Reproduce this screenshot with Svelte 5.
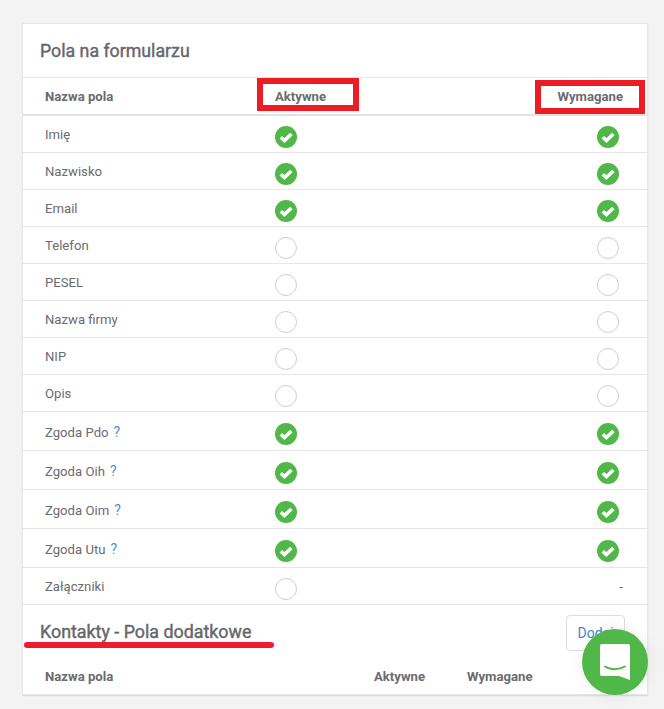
<script>
	const fields = [
		{ name: 'Imię', active: true, required: true },
		{ name: 'Nazwisko', active: true, required: true },
		{ name: 'Email', active: true, required: true },
		{ name: 'Telefon', active: false, required: false },
		{ name: 'PESEL', active: false, required: false },
		{ name: 'Nazwa firmy', active: false, required: false },
		{ name: 'NIP', active: false, required: false },
		{ name: 'Opis', active: false, required: false },
		{ name: 'Zgoda Pdo', active: true, required: true, help: true },
		{ name: 'Zgoda Oih', active: true, required: true, help: true },
		{ name: 'Zgoda Oim', active: true, required: true, help: true },
		{ name: 'Zgoda Utu', active: true, required: true, help: true },
		{ name: 'Załączniki', active: false, required: null }
	];
</script>

{#snippet mark(on)}
	{#if on}
		<svg class="mark" viewBox="0 0 22 22" aria-hidden="true">
			<circle cx="11" cy="11" r="11" fill="#50b848" />
			<path d="M5.8 11.2l3.600 3.400 7-6.600" fill="none" stroke="#fff" stroke-width="3.600" />
		</svg>
	{:else}
		<span class="mark empty"></span>
	{/if}
{/snippet}

<div class="page">
	<section class="card">
		<h2 class="title">Pola na formularzu</h2>

		<div class="row head">
			<span>Nazwa pola</span>
			<span>Aktywne</span>
			<span class="right">Wymagane</span>
		</div>

		{#each fields as f}
			<div class="row" class:help={f.help}>
				<span>{f.name}{#if f.help}<a href="#help">?</a>{/if}</span>
				<span class="cell">{@render mark(f.active)}</span>
				<span class="right cell">
					{#if f.required === null}
						<span class="dash">-</span>
					{:else}
						{@render mark(f.required)}
					{/if}
				</span>
			</div>
		{/each}

		<div class="sub">
			<h2 class="subtitle">Kontakty - Pola dodatkowe</h2>
			<button class="add">Dodaj</button>
		</div>

		<div class="foot">
			<span>Nazwa pola</span>
			<span>Aktywne</span>
			<span>Wymagane</span>
		</div>
	</section>

	<!-- annotations and chat widget sit on top of the page -->
	<span class="box box-a"></span>
	<span class="box box-b"></span>
	<span class="scribble"></span>

	<div class="chat">
		<svg viewBox="0 0 30 36" width="30" height="36" aria-hidden="true">
			<path d="M2 0h26a2 2 0 0 1 2 2v34l-11-4H2a2 2 0 0 1-2-2V2a2 2 0 0 1 2-2z" fill="#fff" />
			<path d="M5 22.500c5 3.500 14 3.500 20 0" fill="none" stroke="#50b848" stroke-width="2" stroke-linecap="round" />
		</svg>
	</div>
</div>

<style>
	:global(body) {
		margin: 0;
		background: #f3f3f3;
	}

	.page {
		position: relative;
		width: 664px;
		height: 709px;
		overflow: hidden;
		padding: 23px 16px 0 22px;
		box-sizing: border-box;
		font-family: Roboto, "Liberation Sans", sans-serif;
		font-size: 13.150px;
		color: #6b6b70;
	}

	.card {
		background: #fff;
		border: 1px solid #e7e7e7;
		height: 672px;
		box-sizing: border-box;
		box-shadow: 0 1px 1px #ddd;
	}

	.title,
	.subtitle {
		margin: 0;
		font-weight: 400;
		line-height: 20px;
		color: #66666b;
		-webkit-text-stroke: 0.4px #66666b;
	}

	.title {
		font-size: 17.750px;
		padding: 17px 17px 16px;
		border-bottom: 1px solid #e7e7e7;
	}

	.subtitle {
		font-size: 17.850px;
		padding-top: 7px;
	}

	.row {
		display: grid;
		grid-template-columns: 230px 1fr auto;
		height: 37px;
		box-sizing: border-box;
		padding: 0 24px 0 22px;
		border-bottom: 1px solid #e7e7e7;
		line-height: 38px;
	}

	.row.help {
		height: 39px;
		line-height: 40px;
	}

	.row.help a {
		font-size: 14px;
		margin-left: 5px;
	}

	.row.help .mark {
		top: 1px;
	}

	.head {
		height: 38px;
		line-height: 37px;
		font-weight: 700;
		border-bottom: 2px solid #e2e2e2;
	}

	.right {
		text-align: right;
	}

	.cell {
		display: flex;
		align-items: center;
	}

	.right.cell {
		justify-content: flex-end;
	}

	.right.cell .mark {
		margin-right: 4px;
	}

	.mark {
		display: block;
		width: 22px;
		height: 22px;
		box-sizing: border-box;
		position: relative;
		top: 2px;
	}

	.empty {
		border: 1px solid #cfcfcf;
		border-radius: 50%;
	}

	a {
		color: #4a90d0;
		text-decoration: none;
	}

	.sub {
		display: flex;
		justify-content: space-between;
		align-items: flex-start;
		padding: 10px 22px 0 17px;
		height: 53px;
		box-sizing: border-box;
	}

	.add {
		width: 59px;
		height: 36px;
		padding: 0;
		background: #fff;
		border: 1px solid #ddd;
		border-radius: 4px;
		font: inherit;
		font-size: 14px;
		color: #4a86d0;
		text-align: center;
	}

	.foot {
		display: grid;
		grid-template-columns: 329px 93px auto;
		padding: 0 22px;
		font-weight: 700;
		line-height: 38px;
	}

	.box {
		position: absolute;
		border: 6px solid #ed1c24;
		box-sizing: border-box;
	}

	.box-a {
		left: 257px;
		top: 78px;
		width: 102px;
		height: 33px;
	}

	.box-b {
		left: 535px;
		top: 80px;
		width: 110px;
		height: 34px;
	}

	.scribble {
		position: absolute;
		left: 24px;
		top: 642px;
		width: 250px;
		height: 6px;
		border-radius: 3px;
		background: #ed1c2e;
	}

	.chat {
		position: absolute;
		left: 582px;
		top: 629px;
		width: 66px;
		height: 66px;
		border-radius: 50%;
		background: #50b848;
		box-shadow: 0 0 16px rgba(0, 0, 0, 0.08);
		display: flex;
		align-items: center;
		justify-content: center;
	}
</style>
